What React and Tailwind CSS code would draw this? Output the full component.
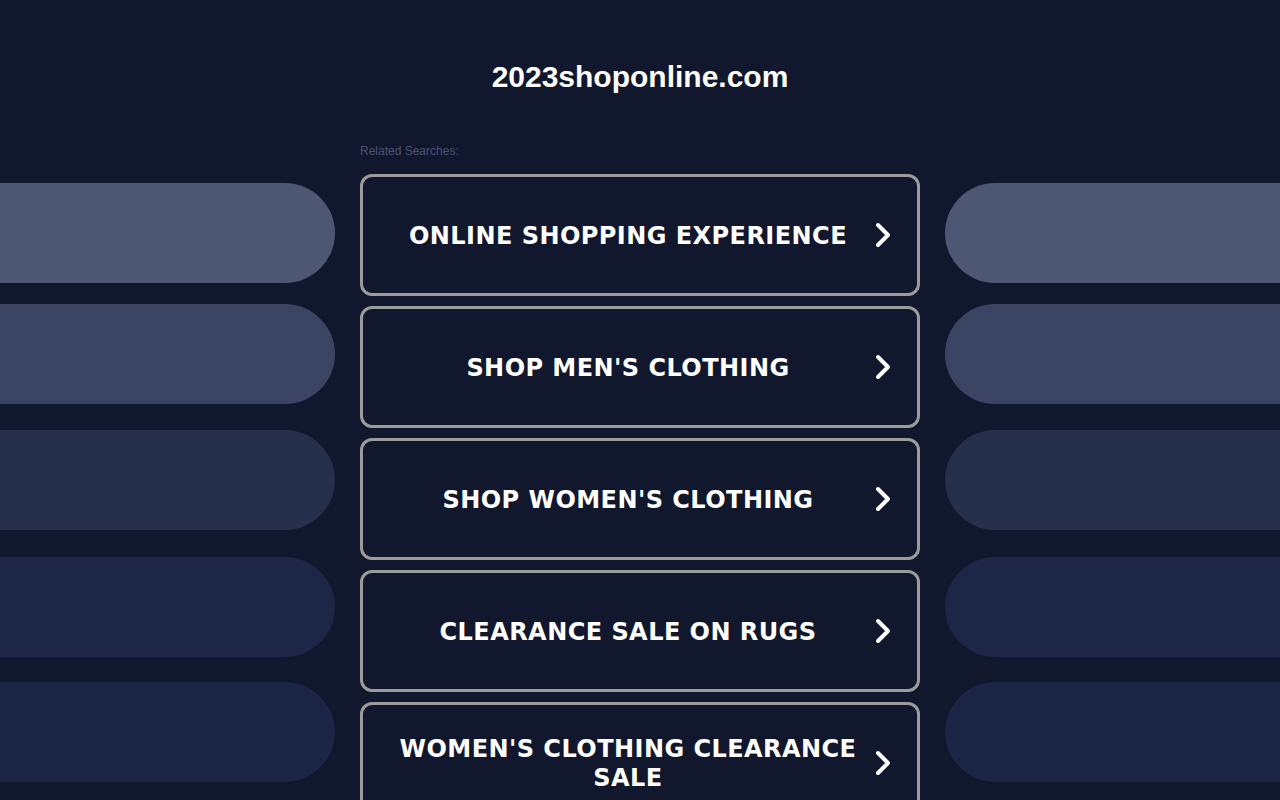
import React from "react";

const items = [
  "ONLINE SHOPPING EXPERIENCE",
  "SHOP MEN'S CLOTHING",
  "SHOP WOMEN'S CLOTHING",
  "CLEARANCE SALE ON RUGS",
  "WOMEN'S CLOTHING CLEARANCE SALE",
];

function Chevron() {
  return (
    <svg width="20" height="28" viewBox="0 0 20 28" className="shrink-0">
      <polyline points="5,4 15,14 5,24" fill="none" stroke="#ffffff" strokeWidth="4" strokeLinecap="round" strokeLinejoin="round" />
    </svg>
  );
}

function Pills({ side }) {
  const round = side === "left" ? "rounded-r-[50px]" : "rounded-l-[50px]";
  return (
    <div className="flex flex-col pt-[43px]">
      <div className={`h-[100px] bg-[#4d5673] ${round}`} />
      <div className={`h-[100px] mt-[21px] bg-[#3b4462] ${round}`} />
      <div className={`h-[100px] mt-[26px] bg-[#262f4c] ${round}`} />
      <div className={`h-[100px] mt-[27px] bg-[#1e2647] ${round}`} />
      <div className={`h-[100px] mt-[25px] bg-[#1c2545] ${round}`} />
    </div>
  );
}

export default function App() {
  return (
    <div className="w-[1280px] h-[800px] overflow-hidden bg-[#11172d]">
      <div className="h-[140px] pt-[57px] text-center">
        <h1 className="text-[30px] leading-[40px] font-bold text-white" style={{ fontFamily: "'Liberation Sans', Arial, sans-serif" }}>
          2023shoponline.com
        </h1>
      </div>
      <div className="grid grid-cols-[335px_560px_335px] gap-x-[25px]">
        <Pills side="left" />
        <div className="flex flex-col">
          <div className="h-[34px] pt-[4px] text-[12px] leading-[14px] text-[#4a5372]" style={{ fontFamily: "'Liberation Sans', Arial, sans-serif" }}>
            Related Searches:
          </div>
          <div className="flex flex-col gap-[10px]">
            {items.map((t) => (
              <div key={t} className="h-[122px] shrink-0 border-[3px] border-[#9b9b9b] rounded-[12px] flex items-center pl-[20px] pr-[24px]">
                <div className="flex-1 text-center text-white font-bold text-[24px] leading-[29px] tracking-[0.45px] pt-[2px]" style={{ fontFamily: "'DejaVu Sans', Verdana, sans-serif" }}>
                  {t}
                </div>
                <Chevron />
              </div>
            ))}
          </div>
        </div>
        <Pills side="right" />
      </div>
    </div>
  );
}
